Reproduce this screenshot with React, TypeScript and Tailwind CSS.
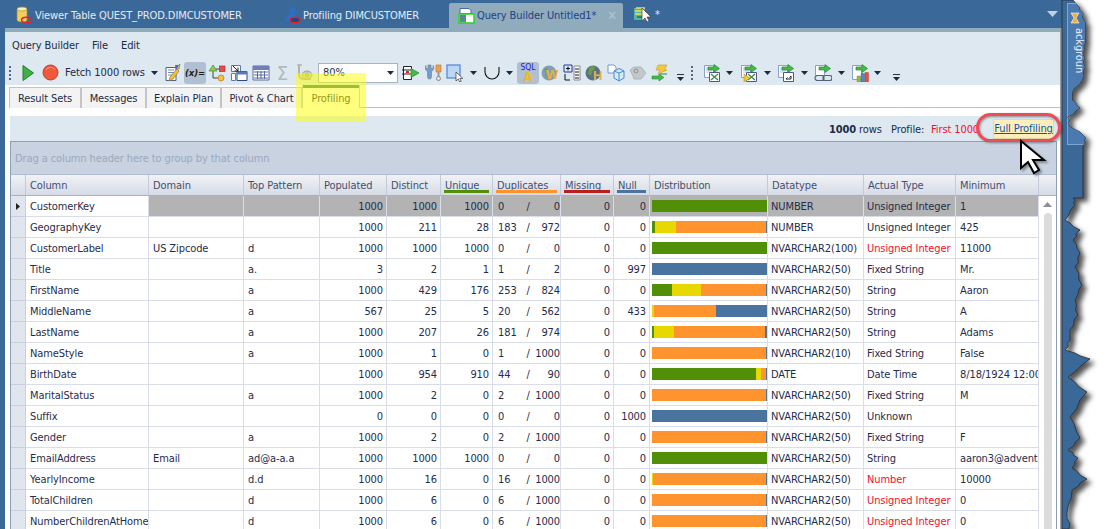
import React from "react";

type Seg = [string, number];
const G = "bg-[#528f08]";
const Y = "bg-[#e6d800]";
const O = "bg-[#ff932e]";
const B = "bg-[#4a74a0]";

interface Row {
  name: string;
  domain?: string;
  pattern?: string;
  populated: number;
  distinct: number;
  unique: number;
  dupA: number;
  dupB: number;
  nul: number;
  bars: Seg[];
  datatype: string;
  actual: string;
  bad?: boolean;
  min: string;
}

const rows: Row[] = [
  { name: "CustomerKey", populated: 1000, distinct: 1000, unique: 1000, dupA: 0, dupB: 0, nul: 0, bars: [[G, 115]], datatype: "NUMBER", actual: "Unsigned Integer", min: "1" },
  { name: "GeographyKey", populated: 1000, distinct: 211, unique: 28, dupA: 183, dupB: 972, nul: 0, bars: [[G, 3], [Y, 21], [O, 90], [B, 1]], datatype: "NUMBER", actual: "Unsigned Integer", min: "425" },
  { name: "CustomerLabel", domain: "US Zipcode", pattern: "d", populated: 1000, distinct: 1000, unique: 1000, dupA: 0, dupB: 0, nul: 0, bars: [[G, 115]], datatype: "NVARCHAR2(100)", actual: "Unsigned Integer", bad: true, min: "11000" },
  { name: "Title", pattern: "a.", populated: 3, distinct: 2, unique: 1, dupA: 1, dupB: 2, nul: 997, bars: [[B, 115]], datatype: "NVARCHAR2(50)", actual: "Fixed String", min: "Mr." },
  { name: "FirstName", pattern: "a", populated: 1000, distinct: 429, unique: 176, dupA: 253, dupB: 824, nul: 0, bars: [[G, 20], [Y, 29], [O, 65], [B, 1]], datatype: "NVARCHAR2(50)", actual: "String", min: "Aaron" },
  { name: "MiddleName", pattern: "a", populated: 567, distinct: 25, unique: 5, dupA: 20, dupB: 562, nul: 433, bars: [[Y, 2], [O, 62], [B, 51]], datatype: "NVARCHAR2(50)", actual: "String", min: "A" },
  { name: "LastName", pattern: "a", populated: 1000, distinct: 207, unique: 26, dupA: 181, dupB: 974, nul: 0, bars: [[G, 2], [Y, 20], [O, 91], [B, 2]], datatype: "NVARCHAR2(50)", actual: "String", min: "Adams" },
  { name: "NameStyle", pattern: "a", populated: 1000, distinct: 1, unique: 0, dupA: 1, dupB: 1000, nul: 0, bars: [[O, 114], [B, 1]], datatype: "NVARCHAR2(10)", actual: "Fixed String", min: "False" },
  { name: "BirthDate", populated: 1000, distinct: 954, unique: 910, dupA: 44, dupB: 90, nul: 0, bars: [[G, 104], [Y, 5], [O, 5], [B, 1]], datatype: "DATE", actual: "Date Time", min: "8/18/1924 12:00:00" },
  { name: "MaritalStatus", pattern: "a", populated: 1000, distinct: 2, unique: 0, dupA: 2, dupB: 1000, nul: 0, bars: [[O, 114], [B, 1]], datatype: "NVARCHAR2(50)", actual: "Fixed String", min: "M" },
  { name: "Suffix", populated: 0, distinct: 0, unique: 0, dupA: 0, dupB: 0, nul: 1000, bars: [[B, 115]], datatype: "NVARCHAR2(50)", actual: "Unknown", min: "" },
  { name: "Gender", pattern: "a", populated: 1000, distinct: 2, unique: 0, dupA: 2, dupB: 1000, nul: 0, bars: [[O, 114], [B, 1]], datatype: "NVARCHAR2(50)", actual: "Fixed String", min: "F" },
  { name: "EmailAddress", domain: "Email", pattern: "ad@a-a.a", populated: 1000, distinct: 1000, unique: 1000, dupA: 0, dupB: 0, nul: 0, bars: [[G, 115]], datatype: "NVARCHAR2(50)", actual: "String", min: "aaron3@adventure-works" },
  { name: "YearlyIncome", pattern: "d.d", populated: 1000, distinct: 16, unique: 0, dupA: 16, dupB: 1000, nul: 0, bars: [[Y, 1], [O, 113], [B, 1]], datatype: "NVARCHAR2(50)", actual: "Number", bad: true, min: "10000" },
  { name: "TotalChildren", pattern: "d", populated: 1000, distinct: 6, unique: 0, dupA: 6, dupB: 1000, nul: 0, bars: [[O, 114], [B, 1]], datatype: "NVARCHAR2(50)", actual: "Unsigned Integer", bad: true, min: "0" },
  { name: "NumberChildrenAtHome", pattern: "d", populated: 1000, distinct: 6, unique: 0, dupA: 6, dupB: 1000, nul: 0, bars: [[O, 114], [B, 1]], datatype: "NVARCHAR2(50)", actual: "Unsigned Integer", bad: true, min: "0" },
];

const cols = "grid grid-cols-[15px_123px_95px_76px_67px_54px_52px_68px_53px_36px_118px_96px_92px_83px]";

const Caret = ({ className = "" }: { className?: string }) => (
  <svg width="7" height="4" viewBox="0 0 7 4" className={className}>
    <path d="M0 0h7L3.5 4z" fill="#1c2b45" />
  </svg>
);

const Grip = ({ className = "" }: { className?: string }) => (
  <div className={`flex flex-col gap-[2px] ${className}`}>
    {[0, 1, 2, 3].map((i) => (
      <span key={i} className="h-[2px] w-[2px] bg-[#56677f]" />
    ))}
  </div>
);

const Overflow = ({ className = "" }: { className?: string }) => (
  <svg width="8" height="8" viewBox="0 0 8 8" className={className}>
    <path d="M0 0h7v1H0z" fill="#333" />
    <path d="M0 3h7L3.5 7z" fill="#1c2b45" />
  </svg>
);

// small document with a green arrow, shared by the export buttons
const ExportBase = () => (
  <>
    <path d="M1.5 1.5h9v12h-9z" fill="#fff" stroke="#8aa0c8" />
    <path d="M3 4h6M3 6h6M3 8h6" stroke="#a8c8e8" />
    <path d="M5 3h6V0.5L16.5 4.5 11 8.5V6H5z" fill="#48b848" stroke="#2a8a3a" strokeWidth="0.7" />
    <path d="M6.5 8.5h10v9h-10z" fill="#fff" stroke="#54548a" />
  </>
);

const Ic = ({ children, className = "", size = 18 }: { children: React.ReactNode; className?: string; size?: number }) => (
  <svg width={size} height={size} viewBox="0 0 18 18" className={`shrink-0 ${className}`}>
    {children}
  </svg>
);

const Toolbar = () => (
  <div className="flex h-[25px] items-center">
    <Grip className="ml-[4px]" />
    <svg width="14" height="18" viewBox="0 0 14 18" className="ml-[10px]">
      <path d="M2 1.5 12.5 9 2 16.5z" fill="#3cb043" stroke="#2b7a3b" />
    </svg>
    <svg width="17" height="17" viewBox="0 0 17 17" className="ml-[7px]">
      <circle cx="8.5" cy="8.5" r="7.5" fill="#f0583c" stroke="#b8402c" />
      <path d="M4 5.5a6 6 0 0 1 9 0" fill="none" stroke="#f79a86" />
    </svg>
    <span className="ml-[6px] w-[85px] whitespace-nowrap text-[#1c2b45]">Fetch 1000 rows</span>
    <Caret className="ml-[1px]" />
    <Ic className="ml-[6px]">
      <path d="M2 3.5h10v13H2z" fill="#fff" stroke="#50608a" />
      <path d="M4 6h6M4 8.5h6M4 11h4" stroke="#7a8cb0" />
      <path d="M16 0l-1 5-3-1.500zM6 13l7-8 2 2-6 8-4 2z" fill="#f0c040" stroke="#8a6a20" strokeWidth="0.6" />
      <path d="M11 1l4 0-3 5z" fill="#5068c8" />
    </Ic>
    <div className="ml-[2px] flex h-[22px] w-[22px] items-center justify-center rounded-[3px] bg-[#b0c0d2] text-[9.500px] font-bold italic text-[#222]">
      (x)=
    </div>
    <Ic className="ml-[2px]">
      <path d="M5 7v7h5M5 5h7" fill="none" stroke="#444" />
      <path d="M5 1 9 7H1z" fill="#8ecb5a" stroke="#4a8a2a" strokeWidth="0.7" />
      <rect x="11.500" y="2" width="5.500" height="5.500" fill="#e84a4a" stroke="#a83030" strokeWidth="0.7" />
      <circle cx="13" cy="14" r="3" fill="#f4c040" stroke="#a88020" strokeWidth="0.7" />
    </Ic>
    <Ic className="ml-[4px]">
      <path d="M1.500 1.500h9v6h-9z" fill="#fff" stroke="#5a7ab0" />
      <path d="M7 7.500h10v9H7z" fill="#fff" stroke="#2a4a8a" />
      <path d="M7 7.500h10v3H7z" fill="#5a7ab8" />
      <path d="M1.500 9.500h4v7h-4z" fill="#fff" stroke="#5a7ab0" />
      <path d="M3 2l5 5M8 3.500V7H4.500" fill="none" stroke="#222" />
    </Ic>
    <Ic className="ml-[4px]">
      <path d="M1 2h16v14H1z" fill="#fff" stroke="#5a6aa0" />
      <path d="M1 2h16v4H1z" fill="#6f80b8" />
      <path d="M2 8h14M2 11h14M2 14h14M5.500 7v8M9 7v8M12.500 7v8" stroke="#5a6aa0" />
    </Ic>
    <span className="ml-[5px] w-[15px] text-center text-[20px] leading-none text-[#b4b8bc]">Σ</span>
    <Ic className="ml-[6px]">
      <path d="M3 1v9c0 3 2 5 5 5h7" fill="none" stroke="#b2b4a8" strokeWidth="2" />
      <ellipse cx="11" cy="11" rx="5" ry="4" fill="#c6c8b4" stroke="#a4a696" />
      <circle cx="11" cy="11" r="1.500" fill="none" stroke="#94967e" />
      <path d="M1 1h5" stroke="#b2b4a8" strokeWidth="1.500" />
    </Ic>
    <div className="ml-[4px] flex h-[20px] w-[80px] items-center justify-between border border-[#aab4c0] bg-white pl-[4px] pr-[3px] text-[#1c2b45]">
      <span>80%</span>
      <Caret />
    </div>
    <Ic className="ml-[4px]">
      <path d="M1.500 2.500h8v13h-8z" fill="#fff" stroke="#222" />
      <path d="M0 6h11M0 10h11" stroke="#222" />
      <path d="M4 7h3v2H4z" fill="#d8282c" />
      <path d="M9 4.500 17 9l-8 4.500z" fill="#48b848" stroke="#2a8a3a" strokeWidth="0.7" />
    </Ic>
    <Ic className="ml-[5px]">
      <path d="M1 1.500a4 4 0 0 0 1.500 6V13a2 2 0 0 0 2 2 2 2 0 0 0 2-2V7.500A4 4 0 0 0 8 1.500v3H6V1H3v3.500H1z" fill="#6f9fd2" stroke="#7a7a7a" strokeWidth="0.6" />
      <path d="M11 1h5v7h-5z" fill="#f0a050" stroke="#b87028" strokeWidth="0.6" />
      <path d="M13.500 8v5" stroke="#9a9a9a" strokeWidth="2" />
      <circle cx="13.500" cy="14.500" r="2" fill="#e8e8e8" stroke="#888" />
    </Ic>
    <Ic className="ml-[3px]">
      <rect x="1" y="1" width="13" height="13" fill="#bcd6f6" stroke="#5a8ad8" strokeWidth="1.300" />
      <path d="M10 8v9l2.200-2 1.500 3 1.500-.7-1.400-2.900h3z" fill="#fff" stroke="#333" strokeWidth="0.7" />
    </Ic>
    <Caret className="ml-[6px]" />
    <svg width="16" height="14" viewBox="0 0 16 14" className="ml-[7px]">
      <path d="M1 1v5a7 7 0 0 0 14 0V1" fill="none" stroke="#111" strokeWidth="1.100" />
    </svg>
    <Caret className="ml-[6px]" />
    <div className="relative ml-[4px] flex h-[22px] w-[22px] flex-col items-center rounded-[3px] bg-[#b0c0d2] pt-[1px]">
      <span className="text-[8.500px] leading-[8px] text-[#1a1ae0]">SQL</span>
      <span className="text-[14px] font-bold leading-[12px] text-[#f0b828]">A</span>
    </div>
    <Ic className="ml-[2px]">
      <circle cx="8" cy="9" r="7.500" fill="#7fa0b8" />
      <path d="M3 5c2-2 4-1 4 1s-3 2-3 5 3 2 3 5" fill="#7a9a5a" />
      <text x="5" y="15" fontSize="13" fontWeight="700" fill="#e8b040" fontFamily="Liberation Sans">W</text>
    </Ic>
    <Ic className="ml-[4px]">
      <path d="M1 1h8v7H1z" fill="#dce8fa" stroke="#1a3a9a" />
      <path d="M3 4.500h4M5 2.500v4" stroke="#111" />
      <path d="M2 10v6h5" fill="none" stroke="#111" />
      <path d="M11 2h6v14h-6z" fill="#fff" stroke="#888" />
      <path d="M12 5h4M12 8h4M12 11h4M12 14h4" stroke="#666" strokeWidth="1.300" />
    </Ic>
    <Ic className="ml-[4px]">
      <circle cx="8" cy="9" r="7.500" fill="#5a7088" />
      <path d="M4 4c3-3 6-2 6 0s-3 2-3 5-2 2-4 1z" fill="#6a9a4a" />
      <text x="8" y="16" fontSize="13" fontWeight="700" fill="#e8b040" fontFamily="Liberation Sans">H</text>
    </Ic>
    <Ic className="ml-[4px]">
      <path d="M1 1h6l2 2v6H1z" fill="#fff" stroke="#6a9ad8" />
      <path d="M7 7l5-2.500 5 2.500v7l-5 3-5-3z" fill="#d4eafa" stroke="#4a8ac8" />
      <path d="M12 9v8M7 7l5 2 5-2" fill="none" stroke="#4a8ac8" />
    </Ic>
    <Ic className="ml-[4px]">
      <path d="M1 6l4-3h7l5 6-5 6H5l-1-3z" fill="#c4c8cc" stroke="#b0b4b8" />
      <circle cx="7" cy="7" r="2" fill="none" stroke="#8e9296" />
    </Ic>
    <Ic className="ml-[4px]">
      <path d="M7 1h9l-3 5h3L7 10l2-4H5z" fill="#f6c83c" stroke="#c89820" strokeWidth="0.6" />
      <path d="M1 12h7v-2l5 3.500L8 17v-2H1z" fill="#48b848" stroke="#2a8a3a" strokeWidth="0.6" />
      <path d="M16 10H9" stroke="#2a8a3a" />
    </Ic>
    <Overflow className="ml-[8px] mt-[10px]" />
    <Grip className="ml-[6px]" />
    <Ic className="ml-[10px]">
      <ExportBase />
      <path d="M8 10l7 6M15 10l-7 6" stroke="#3c8a4a" strokeWidth="1.300" />
    </Ic>
    <Caret className="ml-[5px]" />
    <Ic className="ml-[7px]">
      <ExportBase />
      <path d="M8 10l7 6M15 10l-7 6" stroke="#3c8a4a" strokeWidth="1.300" />
      <path d="M4 10l6 4-6 4z" fill="#f0c830" stroke="#a88820" strokeWidth="0.5" />
    </Ic>
    <Caret className="ml-[6px]" />
    <Ic className="ml-[6px]">
      <ExportBase />
      <path d="M9 15h5v-3M14 12l-1.500 1.500M9 15l1.500-1.500" fill="none" stroke="#222" />
    </Ic>
    <Caret className="ml-[6px]" />
    <Ic className="ml-[6px]">
      <path d="M1.500 1.500h9v10h-9z" fill="#fff" stroke="#8aa0c8" />
      <path d="M5 3h6V0.500L16.500 4.500 11 8.500V6H5z" fill="#48b848" stroke="#2a8a3a" strokeWidth="0.7" />
      <path d="M1 14a2.500 2.500 0 0 1 2.500-2.500h4a2.500 2.500 0 0 1 0 5h-4A2.500 2.500 0 0 1 1 14zM9 14a2.500 2.500 0 0 1 2.500-2.500h4a2.500 2.500 0 0 1 0 5h-4A2.500 2.500 0 0 1 9 14z" fill="none" stroke="#555f78" strokeWidth="1.200" />
    </Ic>
    <Caret className="ml-[6px]" />
    <Ic className="ml-[6px]">
      <path d="M1.500 1.500h9v14h-9z" fill="#fff" stroke="#8aa0c8" />
      <path d="M5 3h6V0.500L16.500 4.500 11 8.500V6H5z" fill="#48b848" stroke="#2a8a3a" strokeWidth="0.7" />
      <path d="M6 12h3.500v6H6z" fill="#9ab83a" stroke="#6a8a2a" strokeWidth="0.4" />
      <path d="M10 9.500h3.500V18H10z" fill="#4a8ad0" stroke="#2a5a9a" strokeWidth="0.4" />
      <path d="M14 8.500h3.500V18H14z" fill="#e8503a" stroke="#a83020" strokeWidth="0.4" />
    </Ic>
    <Caret className="ml-[5px]" />
    <Overflow className="ml-[12px] mt-[10px]" />
  </div>
);

const TopTabs = () => (
  <div className="flex h-[28px] shrink-0 items-center text-[#e4ecf4]">
    <Ic className="ml-[15px] mt-[2px]">
      <path d="M2 3v11c0 1 2 2 5 2s5-1 5-2V3z" fill="#f2d060" stroke="#a88a30" strokeWidth="0.7" />
      <ellipse cx="7" cy="3" rx="5" ry="2" fill="#fbf0b0" stroke="#a88a30" strokeWidth="0.7" />
      <ellipse cx="11.500" cy="14" rx="5" ry="2.700" fill="none" stroke="#e8202c" strokeWidth="1.400" />
    </Ic>
    <span className="ml-[2px] mt-[2px] w-[208px] whitespace-nowrap">Viewer Table QUEST_PROD.DIMCUSTOMER</span>
    <Ic className="ml-[41px] mt-[2px]">
      <circle cx="9" cy="4" r="3" fill="#2a70c8" />
      <path d="M2 15c0-5 3-8 6-8s5 2 6 8z" fill="#2a70c8" />
      <ellipse cx="11" cy="14" rx="5" ry="2.700" fill="#1a4a80" stroke="#e8202c" strokeWidth="1.400" />
    </Ic>
    <span className="ml-[1px] mt-[2px] w-[114px] whitespace-nowrap">Profiling DIMCUSTOMER</span>
    <div className="ml-[32px] mt-[3px] flex h-[25px] w-[174px] items-center rounded-t-[2px] bg-[#8fabbc] text-[#1f3f86]">
      <Ic className="ml-[9px]">
        <path d="M2 1.500h9l2 2v3H2z" fill="#fff" stroke="#4a6a9a" />
        <path d="M1 7h15v9H1z" fill="#fff" stroke="#22d822" strokeWidth="1.400" />
        <path d="M1.700 7.700H8v7.600H1.700z" fill="#5a8a8a" />
      </Ic>
      <span className="ml-[1px] whitespace-nowrap">Query Builder Untitled1*</span>
      <span className="ml-auto mr-[6px] text-[13px] font-bold leading-none text-[#b4c6d2]">✕</span>
    </div>
    <Ic className="ml-[10px]">
      <path d="M1 3h11v12H1z" fill="#58b0a8" />
      <path d="M3 3h9M2 6h10M2 9h9" stroke="#f0e040" strokeWidth="1.500" />
      <path d="M4 12h7" stroke="#2a8a4a" strokeWidth="2" />
      <path d="M9 3v13l3-3 2 4 2-1-2-4h4z" fill="#fff" stroke="#444" strokeWidth="0.7" />
    </Ic>
    <span className="ml-[4px]">*</span>
    <svg width="11" height="6" viewBox="0 0 11 6" className="ml-auto mr-[4px]">
      <path d="M0 0h11L5.500 6z" fill="#c0d0de" />
    </svg>
  </div>
);

const ResultTabs = () => (
  <div className="flex h-[23px] shrink-0 items-end bg-white pl-[4px]">
    {[
      ["Result Sets", "w-[72px]"],
      ["Messages", "w-[65px]"],
      ["Explain Plan", "w-[75px]"],
      ["Pivot & Chart", "w-[81px]"],
    ].map(([t, w]) => (
      <div key={t} className={`flex h-[21px] items-center justify-center border border-b-0 border-[#c4c4c4] bg-[#f3f3f3] pt-[1px] text-[#1c2b45] ${w}`}>
        {t}
      </div>
    ))}
    <div className="flex h-[23px] w-[58px] flex-col border-x border-[#c4c4c4] bg-white text-[#1c2b45]">
      <div className="h-[3px] bg-[#3f7f66]" />
      <div className="flex flex-1 items-center justify-center">Profiling</div>
    </div>
    <div className="h-px flex-1 bg-[#c0c0c0]" />
  </div>
);

const HeadCell = ({ label, bar }: { label?: string; bar?: string }) => (
  <div className="relative flex items-center border-r border-[#c3cbdb] pl-[4px] pt-[1px] text-[#42506e]">
    <span className="whitespace-nowrap">{label}</span>
    {bar && <span className={`absolute inset-x-[3px] bottom-[2px] h-[3px] ${bar}`} />}
  </div>
);

const DataRow = ({ r, selected }: { r: Row; selected: boolean }) => {
  const cell = `flex items-center overflow-hidden whitespace-nowrap border-r border-b border-[#d9dde9] pt-[1px] ${selected ? "bg-[#b3b3b3]" : "bg-white"}`;
  const num = `${cell} justify-end pr-[3px]`;
  return (
    <div className={`${cols} h-[21px] text-[#1f2c4c]`}>
      <div className="flex items-center justify-center border-r border-b border-[#c9cfde] bg-[#e1e5ee]">
        {selected && (
          <svg width="4" height="7" viewBox="0 0 4 7">
            <path d="M0 0l4 3.500L0 7z" fill="#222" />
          </svg>
        )}
      </div>
      <div className="flex items-center overflow-hidden whitespace-nowrap border-r border-b border-[#d9dde9] bg-white pl-[4px] pt-[1px]">{r.name}</div>
      <div className={`${cell} pl-[4px]`}>{r.domain}</div>
      <div className={`${cell} pl-[4px]`}>{r.pattern}</div>
      <div className={num}>{r.populated}</div>
      <div className={num}>{r.distinct}</div>
      <div className={num}>{r.unique}</div>
      <div className={`${cell} pl-[5px]`}>
        <span className="w-[27px]">{r.dupA}</span>
        <span className="w-[6px] text-center">/</span>
        <span className="flex-1 text-right">{r.dupB}</span>
      </div>
      <div className={num}>0</div>
      <div className={num}>{r.nul}</div>
      <div className={`${cell} pl-[2px] !pt-0`}>
        <div className="flex h-[12px] w-[115px]">
          {r.bars.map(([c, w], i) => (
            <div key={i} className={`h-full ${c}`} style={{ width: w }} />
          ))}
        </div>
      </div>
      <div className={`${cell} pl-[3px]`}>{r.datatype}</div>
      <div className={`${cell} pl-[3px] ${r.bad ? "text-[#f01030]" : ""}`}>{r.actual}</div>
      <div className={`${cell} pl-[4px]`}>{r.min}</div>
    </div>
  );
};

const Grid = () => (
  <div className="flex min-h-0 flex-1 flex-col border border-b-0 border-[#8f9db5]">
    <div className="flex h-[33px] shrink-0 items-center border-b border-[#b0bccf] bg-[#c8d2e1] pl-[4px] pt-[1px] text-[#9ca8bd]">
      Drag a column header here to group by that column
    </div>
    <div className="flex min-h-0 flex-1">
      <div className="w-[1028px] shrink-0">
        <div className={`${cols} h-[21px] border-b border-[#a8b2c5] bg-gradient-to-b from-[#f0f2f6] to-[#d6dbe6]`}>
          <HeadCell />
          <HeadCell label="Column" />
          <HeadCell label="Domain" />
          <HeadCell label="Top Pattern" />
          <HeadCell label="Populated" />
          <HeadCell label="Distinct" />
          <HeadCell label="Unique" bar="bg-[#528f08]" />
          <HeadCell label="Duplicates" bar="bg-[#ff932e]" />
          <HeadCell label="Missing" bar="bg-[#b82020]" />
          <HeadCell label="Null" bar="bg-[#4a74a0]" />
          <HeadCell label="Distribution" />
          <HeadCell label="Datatype" />
          <HeadCell label="Actual Type" />
          <HeadCell label="Minimum" />
        </div>
        {rows.map((r, i) => (
          <DataRow key={r.name} r={r} selected={i === 0} />
        ))}
      </div>
      <div className="flex flex-1 flex-col">
        <div className="h-[21px] border-b border-[#a8b2c5] bg-gradient-to-b from-[#f0f2f6] to-[#d6dbe6]" />
        <div className="flex h-[17px] items-center justify-center bg-white">
          <svg width="9" height="5" viewBox="0 0 9 5">
            <path d="M0 5 4.500 0 9 5z" fill="#8a8f98" />
          </svg>
        </div>
        <div className="mx-auto w-[8px] flex-1 rounded-t-[4px] bg-[#dcdcdc]" />
      </div>
    </div>
  </div>
);

// jagged "torn paper" edge of the screenshot, rough points plus small fixed jitter
const rough: [number, number][] = [
  [11, 0], [15, 5], [21, 13], [23, 27], [23, 43], [20, 53], [23, 67], [20, 80], [10, 93], [10, 100], [18, 108], [5, 117], [8, 127], [18, 132], [24, 138], [21, 145],
  [21, 198], [11, 198], [13, 205], [3, 220], [18, 230], [11, 240], [18, 253], [13, 267], [20, 285], [13, 300], [16, 315], [8, 330], [8, 340], [3, 350], [28, 359], [6, 377], [25, 392], [8, 417], [18, 438], [6, 450], [16, 458], [10, 468], [25, 479], [10, 490], [5, 513], [7, 529],
];
const jitter = [1.5, -1, 0.5, -1.5, 1, -0.5];
const edgePts: string[] = ["0,0"];
rough.forEach(([x, y], i) => {
  edgePts.push(`${x},${y}`);
  const next = rough[i + 1];
  if (next && next[1] - y > 6 && x !== next[0]) {
    for (let k = 1; k < 3; k++) {
      const t = k / 3;
      edgePts.push(`${x + (next[0] - x) * t + jitter[(i + k) % 6]},${y + (next[1] - y) * t}`);
    }
  }
});
edgePts.push("0,529");
const edge = edgePts.join(" ");

const RightStrip = () => (
  <div className="relative w-[50px] shrink-0">
    <svg width="50" height="529" viewBox="0 0 50 529" className="block overflow-visible">
      <defs>
        <clipPath id="torn">
          <polygon points={edge} />
        </clipPath>
        <filter id="tornShadow" x="-20%" y="-5%" width="160%" height="110%">
          <feGaussianBlur stdDeviation="2.500" />
        </filter>
      </defs>
      <polygon points={edge} fill="#555" transform="translate(5 4)" filter="url(#tornShadow)" />
      <polygon points={edge} fill="#3a6899" stroke="#2c2c2c" strokeWidth="0.8" />
      <g clipPath="url(#torn)">
        <rect x="5.500" y="3.500" width="30" height="141" fill="#4a7ab0" stroke="#7fa6cf" />
        <path d="M9 13h8l-3 5 3 5H9l3-5z" fill="#f0b040" stroke="#fff" strokeWidth="0.6" />
      </g>
    </svg>
    <div className="absolute left-[11px] top-[28px] h-[47px] w-[12px] overflow-hidden whitespace-nowrap text-[#e8f0f8] [writing-mode:vertical-rl]">
      ackgroun
    </div>
  </div>
);

export default function App() {
  return (
    <div className="relative flex h-[529px] w-[1112px] overflow-hidden bg-white font-['DejaVu_Sans_Condensed','DejaVu_Sans',sans-serif] text-[11px] leading-none tracking-[-0.1px]">
      <div className="flex w-[1062px] shrink-0 flex-col bg-[#3a6899]">
        <TopTabs />
        <div className="ml-[5px] flex min-h-0 flex-1 flex-col border-r-2 border-[#9b9b9b] bg-white">
          <div className="h-[4px] shrink-0 bg-[#8fabbc]" />
          <div className="h-[53px] shrink-0 bg-[#dde8f0]">
            <div className="flex h-[28px] items-center gap-[13px] pb-[2px] pl-[7px] text-[#1c2b45]">
              <span>Query Builder</span>
              <span>File</span>
              <span>Edit</span>
            </div>
            <Toolbar />
          </div>
          <ResultTabs />
          <div className="flex min-h-0 flex-1 flex-col pl-[5px] pr-[3px] pt-[8px]">
            <div className="-mr-[3px] flex h-[25px] shrink-0 items-center justify-end whitespace-nowrap bg-[#dde8f0] pr-[6px] text-[#1c2b45]">
              <b className="w-[30px] pt-[1px]">1000</b>
              <span className="w-[25px] pt-[1px]">rows</span>
              <span className="ml-[7px] w-[35px] pt-[1px]">Profile:</span>
              <span className="ml-[5px] w-[48px] overflow-hidden pt-[1px] text-[#f01030]">First 1000</span>
              <span className="ml-[14px] flex h-[20px] w-[61px] items-center justify-center border border-[#e6d8a8] bg-[#fdeebb] text-[#0a58b0] underline">
                Full Profiling
              </span>
            </div>
            <Grid />
          </div>
        </div>
      </div>
      <RightStrip />

      {/* annotations drawn on top of the screenshot */}
      <div className="pointer-events-none absolute left-[296px] top-[73px] h-[49px] w-[70px] bg-[#ffff00]/50" />
      <div className="pointer-events-none absolute left-[976px] top-[113px] h-[29px] w-[85px] rounded-[15px] border-[3px] border-[#ee4b55] drop-shadow-[1px_1px_1px_rgba(0,0,0,0.4)]" />
      <svg width="30" height="36" viewBox="0 0 30 36" className="pointer-events-none absolute left-[1019px] top-[139px] drop-shadow-[2px_2px_1px_rgba(0,0,0,0.35)]">
        <path d="M2 2v27l7-6 6 11 5-3-6-10h11z" fill="#fff" stroke="#000" strokeWidth="2" strokeLinejoin="miter" />
      </svg>
    </div>
  );
}
